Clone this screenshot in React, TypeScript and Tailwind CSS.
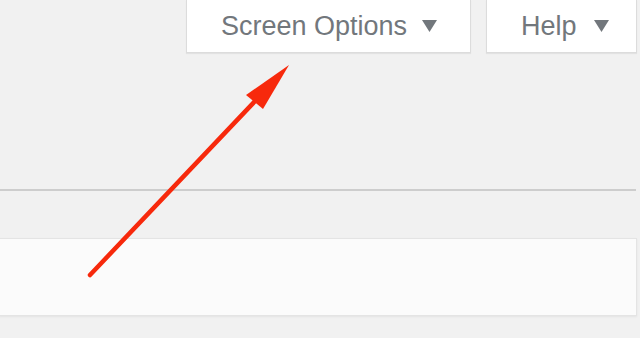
import React from "react";

function Caret() {
  return (
    <svg width="15" height="12" viewBox="0 0 15 12" className="shrink-0">
      <polygon points="0,0 15,0 7.5,12" fill="#72777c" />
    </svg>
  );
}

export default function App() {
  return (
    <div
      className="relative w-[640px] h-[338px] overflow-hidden bg-[#f1f1f1]"
      style={{ fontFamily: '"Liberation Sans", Arial, sans-serif' }}
    >
      {/* TOP TABS */}
      <div className="flex justify-end gap-[15px] pr-[3px]">
        <button className="h-[53px] w-[285px] flex items-center pl-[34px] gap-[15px] bg-white border border-t-0 border-[#dcdcdc] shadow-[0_1px_1px_rgba(0,0,0,0.06)] text-[27px] leading-none text-[#72777c]">
          <span>Screen Options</span>
          <Caret />
        </button>
        <button className="h-[53px] w-[151px] flex items-center pl-[34px] gap-[17px] bg-white border border-t-0 border-[#dcdcdc] shadow-[0_1px_1px_rgba(0,0,0,0.06)] text-[27px] leading-none text-[#72777c]">
          <span>Help</span>
          <Caret />
        </button>
      </div>

      {/* DIVIDER */}
      <div className="mt-[136px] h-[2px] w-[636px] bg-[#cdcdcd]" />

      {/* BOX */}
      <div className="mt-[47px] -ml-px w-[638px] h-[78px] bg-[#fbfbfb] border border-[#e4e4e4] shadow-[0_1px_2px_rgba(0,0,0,0.06)]" />

      {/* ARROW */}
      <svg
        className="absolute left-0 top-0 pointer-events-none"
        width="640"
        height="338"
        viewBox="0 0 640 338"
      >
        <line
          x1="90"
          y1="275"
          x2="258"
          y2="98"
          stroke="#f7290c"
          strokeWidth="4.5"
          strokeLinecap="round"
        />
        <polygon points="289,65 246,95 263,109" fill="#f7290c" />
      </svg>
    </div>
  );
}
